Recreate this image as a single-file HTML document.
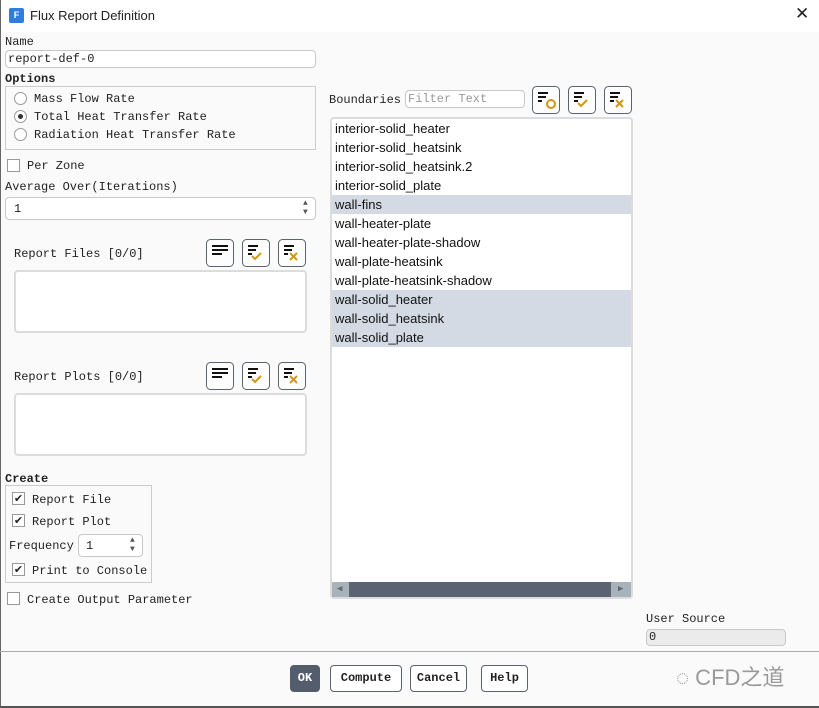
<!DOCTYPE html><html><head><style>
*{box-sizing:border-box;margin:0;padding:0}
body{width:819px;height:708px;background:#fafafa;position:relative;overflow:hidden;font-family:"Liberation Mono",monospace;font-size:12px;color:#222}
.a{position:absolute;white-space:nowrap}
.s{font-family:"Liberation Sans","Noto Sans CJK SC",sans-serif}
.in{position:absolute;border:1px solid #c8c8c8;border-radius:4px;background:#fff}
.box{position:absolute;border:2px solid #dcdcdc;border-radius:4px;background:#fff}
.rad{position:absolute;width:13px;height:13px;border:1px solid #999;border-radius:50%;background:#fff}
.cb{position:absolute;width:13px;height:13px;border:1px solid #999;background:#fff;font-size:11px;line-height:11px;text-align:center;font-family:"DejaVu Sans",sans-serif;color:#222}
.li{position:absolute;left:332px;width:299px;height:19px;line-height:19px;padding-left:3px;font-family:"Liberation Sans",sans-serif;font-size:13px;color:#111}
.hl{background:#d3dae3}
.btn{position:absolute;top:665px;height:27px;border:1px solid #5a6270;border-radius:4px;background:#fff;font-weight:bold;font-size:12px;line-height:25px;text-align:center}
</style></head><body>
<div class="a" style="left:0;top:0;width:819px;height:32px;background:#fff"></div>
<div class="a" style="left:0;top:0;width:1px;height:708px;background:#666"></div>
<div class="a" style="left:0;top:706px;width:819px;height:2px;background:#555"></div>
<div class="a" style="left:9px;top:8px;width:15px;height:15px;background:#2f7de0;border-radius:2px;color:#fff;font:bold 9px 'Liberation Sans';text-align:center;line-height:15px">F</div>
<div class="a s" style="left:30px;top:8px;font-size:13px">Flux Report Definition</div>
<div class="a s" style="left:795px;top:4px;font-size:17px">✕</div>

<div class="a" style="left:5px;top:35px">Name</div>
<div class="in" style="left:5px;top:50px;width:311px;height:18px"><span class="a" style="left:2px;top:1px">report-def-0</span></div>
<div class="a" style="left:5px;top:72px;font-weight:bold">Options</div>
<div class="a" style="left:5px;top:86px;width:311px;height:64px;border:1px solid #ccc;background:#fafafa"></div>
<div class="rad" style="left:14px;top:92px"></div><div class="a" style="left:34px;top:92px">Mass Flow Rate</div>
<div class="rad" style="left:14px;top:110px"><div style="position:absolute;left:3px;top:3px;width:5px;height:5px;border-radius:50%;background:#333"></div></div><div class="a" style="left:34px;top:110px">Total Heat Transfer Rate</div>
<div class="rad" style="left:14px;top:128px"></div><div class="a" style="left:34px;top:128px">Radiation Heat Transfer Rate</div>
<div class="cb" style="left:7px;top:159px"></div><div class="a" style="left:27px;top:159px">Per Zone</div>
<div class="a" style="left:5px;top:180px">Average Over(Iterations)</div>
<div class="in" style="left:5px;top:197px;width:311px;height:23px"><span class="a" style="left:8px;top:4px">1</span><span class="a" style="left:297px;top:1px;font-size:8px;color:#555;line-height:9px">▲<br>▼</span></div>

<div class="a" style="left:14px;top:247px">Report Files [0/0]</div>
<div class="box" style="left:14px;top:270px;width:293px;height:63px"></div>
<div class="a" style="left:14px;top:370px">Report Plots [0/0]</div>
<div class="box" style="left:14px;top:393px;width:293px;height:63px"></div>

<div class="a" style="left:5px;top:472px;font-weight:bold">Create</div>
<div class="a" style="left:5px;top:485px;width:147px;height:98px;border:1px solid #ccc"></div>
<div class="cb" style="left:12px;top:492px">✔</div><div class="a" style="left:32px;top:493px">Report File</div>
<div class="cb" style="left:12px;top:514px">✔</div><div class="a" style="left:32px;top:515px">Report Plot</div>
<div class="a" style="left:9px;top:539px">Frequency</div>
<div class="in" style="left:78px;top:534px;width:65px;height:23px"><span class="a" style="left:7px;top:4px">1</span><span class="a" style="left:51px;top:1px;font-size:8px;color:#555;line-height:9px">▲<br>▼</span></div>
<div class="cb" style="left:12px;top:563px">✔</div><div class="a" style="left:32px;top:564px">Print to Console</div>
<div class="cb" style="left:7px;top:592px"></div><div class="a" style="left:27px;top:593px">Create Output Parameter</div>

<div class="a" style="left:329px;top:93px">Boundaries</div>
<div class="in" style="left:405px;top:90px;width:120px;height:18px"><span class="a" style="left:2px;top:1px;color:#999">Filter Text</span></div>

<div class="box" style="left:330px;top:117px;width:303px;height:482px"></div>
<div class="li" style="top:119px">interior-solid_heater</div>
<div class="li" style="top:138px">interior-solid_heatsink</div>
<div class="li" style="top:157px">interior-solid_heatsink.2</div>
<div class="li" style="top:176px">interior-solid_plate</div>
<div class="li hl" style="top:195px">wall-fins</div>
<div class="li" style="top:214px">wall-heater-plate</div>
<div class="li" style="top:233px">wall-heater-plate-shadow</div>
<div class="li" style="top:252px">wall-plate-heatsink</div>
<div class="li" style="top:271px">wall-plate-heatsink-shadow</div>
<div class="li hl" style="top:290px">wall-solid_heater</div>
<div class="li hl" style="top:309px">wall-solid_heatsink</div>
<div class="li hl" style="top:328px">wall-solid_plate</div>
<div class="a" style="left:332px;top:582px;width:299px;height:15px;background:#a7b3bb"></div>
<div class="a" style="left:349px;top:582px;width:262px;height:15px;background:#5b6373"></div>
<div class="a" style="left:337px;top:582px;font-size:9px;color:#667;line-height:15px">◀</div>
<div class="a" style="left:618px;top:582px;font-size:9px;color:#667;line-height:15px">▶</div>

<div class="a" style="left:646px;top:612px">User Source</div>
<div class="a" style="left:646px;top:629px;width:140px;height:17px;background:#ebebeb;border:1px solid #c8c8c8;border-radius:4px;padding-left:2px;line-height:15px">0</div>
<div class="a" style="left:0;top:651px;width:819px;height:1px;background:#aaa"></div>

<div class="btn" style="left:290px;width:30px;background:#545d6b;color:#fff;border-color:#545d6b">OK</div>
<div class="btn" style="left:330px;width:72px">Compute</div>
<div class="btn" style="left:410px;width:57px">Cancel</div>
<div class="btn" style="left:481px;width:47px">Help</div>
<div class="a s" style="left:676px;top:660px;font-size:22px;color:#999">◌ CFD之道</div>

<svg class="a" style="left:0;top:0" width="819" height="708">
<g fill="#fdfdfd" stroke="#5a6270">
<rect x="532.5" y="86.5" width="27" height="27" rx="4"/><rect x="568.5" y="86.5" width="27" height="27" rx="4"/><rect x="604.5" y="86.5" width="27" height="27" rx="4"/>
<rect x="206.5" y="239.5" width="27" height="27" rx="4"/><rect x="242.5" y="239.5" width="27" height="27" rx="4"/><rect x="278.5" y="239.5" width="27" height="27" rx="4"/>
<rect x="206.5" y="362.5" width="27" height="27" rx="4"/><rect x="242.5" y="362.5" width="27" height="27" rx="4"/><rect x="278.5" y="362.5" width="27" height="27" rx="4"/>
</g>
<g stroke="#111" stroke-width="2">
<path d="M538 93h10M538 97h8M538 101h4"/><path d="M574 93h10M574 97h8M574 101h4"/><path d="M610 93h10M610 97h8M610 101h4"/>
<path d="M212 246h16M212 250h16M212 254h10"/><path d="M248 246h10M248 250h8M248 254h4"/><path d="M284 246h10M284 250h8M284 254h4"/>
<path d="M212 369h16M212 373h16M212 377h10"/><path d="M248 369h10M248 373h8M248 377h4"/><path d="M284 369h10M284 373h8M284 377h4"/>
</g>
<g stroke="#d4950f" stroke-width="2" fill="none">
<circle cx="551" cy="104" r="4"/>
<path d="M578 103l3 3 6-6"/><path d="M252 256l3 3 6-6"/><path d="M252 379l3 3 6-6"/>
<path d="M616 100l7 7M623 100l-7 7"/><path d="M290 253l7 7M297 253l-7 7"/><path d="M290 376l7 7M297 376l-7 7"/>
</g>
</svg>
</body></html>
